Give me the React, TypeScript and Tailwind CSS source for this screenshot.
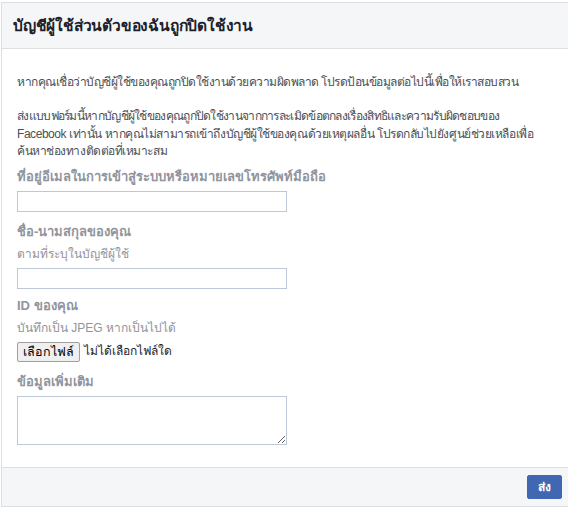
const thai = "font-['Liberation_Sans','Tahoma','DejaVu_Sans',sans-serif]";

function Label({ children }: { children: React.ReactNode }) {
  return <div className="text-[13px] font-bold leading-[16px] text-[#90949c]">{children}</div>;
}

function Hint({ children }: { children: React.ReactNode }) {
  return <div className="mt-[6px] text-[12px] leading-[16px] text-[#90949c]">{children}</div>;
}

export default function App() {
  return (
    <div className={`h-[509px] w-[568px] overflow-hidden bg-white pl-px pt-[2px] ${thai}`}>
      <div className="flex w-[580px] flex-col border border-[#dddfe2] bg-white">
        <div className="flex h-[46px] items-center border-b border-[#dddfe2] bg-[#f5f6f7] pl-[11px]">
          <h1 className="text-[15.5px] font-bold tracking-[-0.2px] text-[#1d2129]">บัญชีผู้ใช้ส่วนตัวของฉันถูกปิดใช้งาน</h1>
        </div>

        <div className="px-[15px] pb-[22px] pt-[25px] text-[12px] leading-[17px] text-[#4b4f56]">
          <p className="whitespace-nowrap tracking-[-0.5px]">
            หากคุณเชื่อว่าบัญชีผู้ใช้ของคุณถูกปิดใช้งานด้วยความผิดพลาด โปรดป้อนข้อมูลต่อไปนี้เพื่อให้เราสอบสวน
          </p>
          <p className="mt-[17px] whitespace-nowrap leading-[17.5px] tracking-[-0.45px]">
            <span className="tracking-[-0.7px]">ส่งแบบฟอร์มนี้หากบัญชีผู้ใช้ของคุณถูกปิดใช้งานจากการละเมิดข้อตกลงเรื่องสิทธิและความรับผิดชอบของ</span>
            <br />
            Facebook เท่านั้น หากคุณไม่สามารถเข้าถึงบัญชีผู้ใช้ของคุณด้วยเหตุผลอื่น โปรดกลับไปยังศูนย์ช่วยเหลือเพื่อ
            <br />
            ค้นหาช่องทางติดต่อที่เหมาะสม
          </p>

          <div className="mt-[8px]">
            <Label>ที่อยู่อีเมลในการเข้าสู่ระบบหรือหมายเลขโทรศัพท์มือถือ</Label>
            <input className="mt-[6px] block h-[21px] w-[270px] border border-[#bdc7d8] bg-white" />
          </div>

          <div className="mt-[12px]">
            <Label>ชื่อ-นามสกุลของคุณ</Label>
            <Hint>ตามที่ระบุในบัญชีผู้ใช้</Hint>
            <input className="mt-[6px] block h-[21px] w-[270px] border border-[#bdc7d8] bg-white" />
          </div>

          <div className="mt-[9px]">
            <Label>ID ของคุณ</Label>
            <Hint>บันทึกเป็น JPEG หากเป็นไปได้</Hint>
            <div className="mt-[6px] flex items-center gap-[4px] text-[12px] text-[#1d2129]">
              <button className="h-[20px] rounded-[2px] border border-[#a0a0a0] bg-[#efefef] px-[5px] text-[12.5px] leading-[16px] text-black">
                เลือกไฟล์
              </button>
              <span>ไม่ได้เลือกไฟล์ใด</span>
            </div>
          </div>

          <div className="mt-[12px]">
            <Label>ข้อมูลเพิ่มเติม</Label>
            <textarea className="mt-[6px] block h-[49px] w-[270px] border border-[#bdc7d8] bg-white" />
          </div>
        </div>

        <div className="flex h-[39px] items-center border-t border-[#dddfe2] bg-[#f5f6f7] pl-[525px]">
          <button className="h-[24px] rounded-[2px] border border-[#4267b2] bg-[#4267b2] px-[10px] text-[12px] font-bold text-white">
            ส่ง
          </button>
        </div>
      </div>
    </div>
  );
}
